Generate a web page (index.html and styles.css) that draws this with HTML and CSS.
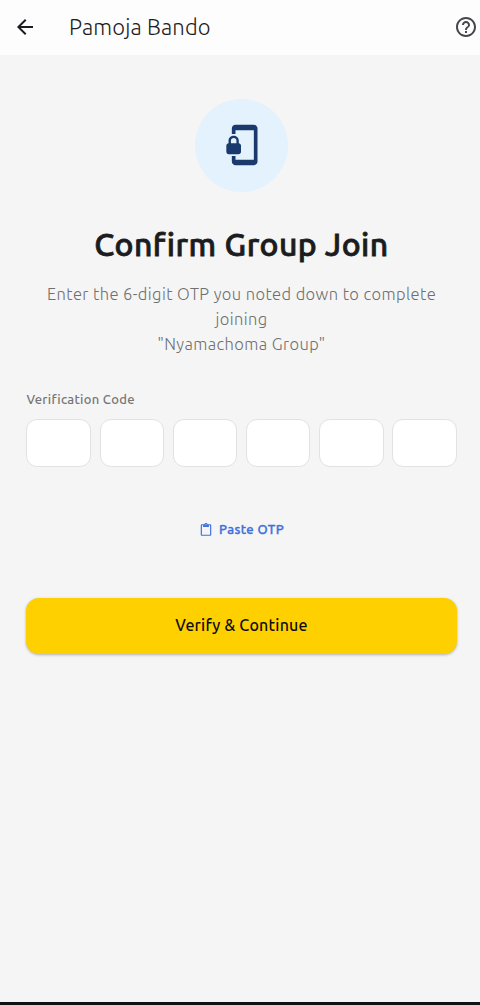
FILE: index.html
```
<!DOCTYPE html>
<html lang="en">
<head>
<meta charset="utf-8">
<title>Pamoja Bando</title>
<link rel="stylesheet" href="styles.css">
</head>
<body>
<div class="screen">
  <header class="appbar">
    <svg class="back" viewBox="0 0 24 24"><path d="M20 11H7.83l5.59-5.59L12 4l-8 8 8 8 1.41-1.41L7.83 13H20v-2z"/></svg>
    <span class="appbar-title">Pamoja Bando</span>
    <svg class="help" viewBox="0 0 24 24"><path d="M11 18h2v-2h-2v2zm1-16C6.48 2 2 6.48 2 12s4.48 10 10 10 10-4.48 10-10S17.52 2 12 2zm0 18c-4.41 0-8-3.590-8-8s3.590-8 8-8 8 3.590 8 8-3.590 8-8 8zm0-14c-2.210 0-4 1.790-4 4h2c0-1.100.900-2 2-2s2 .900 2 2c0 2-3 1.750-3 5h2c0-2.250 3-2.500 3-5 0-2.210-1.790-4-4-4z"/></svg>
  </header>
  <main class="content">
    <div class="badge">
      <svg viewBox="0 0 24 24"><path d="M19 1H9c-1.100 0-2 .900-2 2v3h2V4h10v16H9v-2H7v3c0 1.100.900 2 2 2h10c1.100 0 2-.900 2-2V3c0-1.100-.900-2-2-2zm-8.200 10V9.500C10.800 8.100 9.400 7 8 7S5.200 8.100 5.200 9.500V11c-.600 0-1.200.600-1.200 1.200v3.500c0 .700.600 1.300 1.200 1.300h5.500c.700 0 1.300-.600 1.300-1.200v-3.500c0-.700-.600-1.300-1.200-1.300zm-1.300 0h-3V9.500c0-.800.700-1.300 1.500-1.300s1.500.500 1.500 1.300V11z"/></svg>
    </div>
    <h1 class="heading">Confirm Group Join</h1>
    <p class="lead">Enter the 6-digit OTP you noted down to complete<br>joining<br>"Nyamachoma Group"</p>
    <div class="label">Verification Code</div>
    <div class="otp">
      <div class="digit"></div><div class="digit"></div><div class="digit"></div><div class="digit"></div><div class="digit"></div><div class="digit"></div>
    </div>
    <div class="paste">
      <svg viewBox="0 0 24 24"><path d="M19 2h-4.180C14.400.840 13.300 0 12 0S9.600.840 9.180 2H5c-1.100 0-2 .900-2 2v16c0 1.100.900 2 2 2h14c1.100 0 2-.900 2-2V4c0-1.100-.900-2-2-2zm-7 0c.550 0 1 .450 1 1s-.450 1-1 1-1-.450-1-1 .450-1 1-1zm7 18H5V4h2v3h10V4h2v16z"/></svg>
      <span>Paste OTP</span>
    </div>
    <div class="verify"><span>Verify &amp; Continue</span></div>
  </main>
  <div class="navbar"></div>
</div>
</body>
</html>
```
FILE: styles.css
```
* { box-sizing: border-box; }
body { margin: 0; background: #f5f5f5; font-family: "Ubuntu", "Open Sans", "Noto Sans", sans-serif; }
.screen { width: 480px; height: 1005px; display: flex; flex-direction: column; overflow: hidden; background: #f5f5f5; }
.appbar { height: 55px; flex: none; background: #fdfdfd; display: flex; align-items: center; padding: 0 2px 1px 13px; }
.appbar svg { width: 24px; height: 24px; flex: none; }
.back { fill: #1d1b20; }
.help { fill: #45464c; margin-left: auto; }
.appbar-title { margin-left: 32px; padding-bottom: 1px; font-size: 22px; letter-spacing: .15px; font-weight: 300; color: #1d1b20; white-space: nowrap; }
.content { flex: 1; padding: 43.500px 23.400px 0 26.400px; display: flex; flex-direction: column; }
.badge { width: 93px; height: 93px; flex: none; border-radius: 50%; background: #e3f2fd; align-self: center; display: flex; align-items: center; justify-content: center; }
.badge svg { width: 44px; height: 44px; fill: #1a3a6e; margin-right: 1px; }
.heading { margin: 30.500px 0 0; height: 44px; line-height: 44px; font-size: 32px; font-weight: 500; letter-spacing: .45px; -webkit-text-stroke: .8px #1b1c20; color: #1b1c20; text-align: center; white-space: nowrap; }
.lead { margin: 16px 0 0; font-size: 16.500px; line-height: 25px; font-weight: 300; letter-spacing: .4px; color: #6f6f6f; text-align: center; white-space: nowrap; }
.label { margin-top: 32px; height: 20px; line-height: 20px; font-size: 13px; font-weight: 500; letter-spacing: .3px; color: #757575; white-space: nowrap; }
.otp { margin-top: 10px; display: flex; gap: 8.600px; }
.digit { flex: 1; height: 48px; background: #fff; border: 1px solid #e2e2e2; border-radius: 11px; }
.paste { margin-top: 51px; height: 22px; display: flex; align-items: center; justify-content: center; gap: 6px; color: #3f70dd; font-size: 13px; font-weight: 500; letter-spacing: .4px; -webkit-text-stroke: .35px #3f70dd; }
.paste svg { width: 14px; height: 14px; fill: #3f70dd; margin-top: 1px; }
.verify { margin-top: 58px; height: 55.500px; padding-bottom: 1.500px; border-radius: 13px; background: #ffd000; display: flex; align-items: center; justify-content: center; font-size: 16px; letter-spacing: .2px; font-weight: 500; color: #0d0d0d; box-shadow: 0 1px 3px rgba(0,0,0,.28); }
.navbar { height: 3px; flex: none; background: #121216; }
```
